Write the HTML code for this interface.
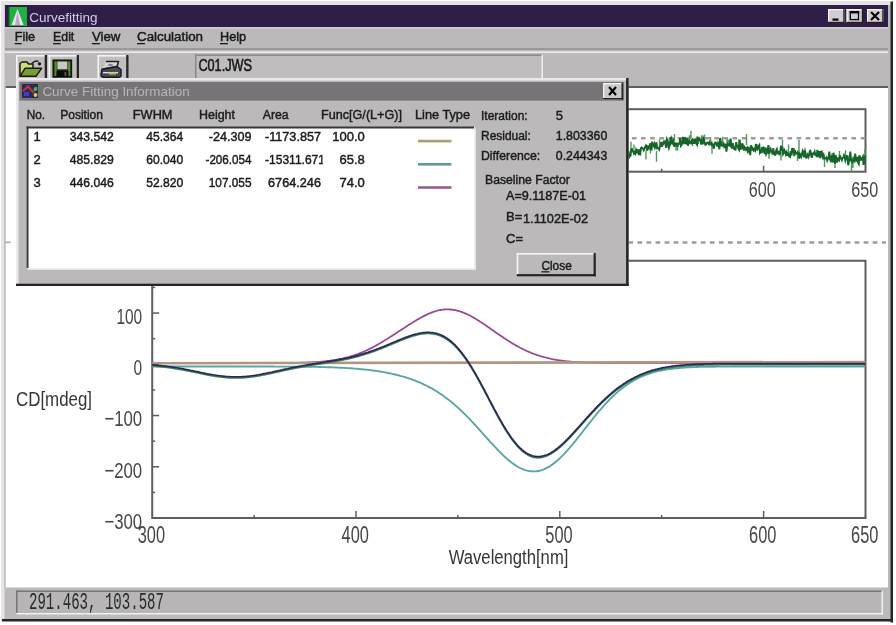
<!DOCTYPE html>
<html><head><meta charset="utf-8"><style>
html,body{margin:0;padding:0;background:#fff;width:896px;height:625px;overflow:hidden;font-family:"Liberation Sans", sans-serif;}
svg{display:block;filter:blur(0.35px);}
</style></head><body>
<svg width="896" height="625" viewBox="0 0 896 625" font-family="'Liberation Sans', sans-serif"><rect x="0" y="0" width="896" height="625" fill="#ffffff" />
<rect x="2" y="2" width="891" height="619" fill="#bbb9ba" />
<rect x="1" y="1" width="892" height="4" fill="#e4e2e2" />
<rect x="1" y="1" width="3.5" height="620" fill="#e6e4e4" />
<rect x="890.5" y="1.5" width="2.5" height="621" fill="#262424" />
<rect x="2" y="619" width="891" height="2.5" fill="#262424" />
<rect x="5" y="5" width="883" height="22" fill="#2e1e48" />
<rect x="5" y="27" width="883" height="2" fill="#cac8cc" />
<rect x="8" y="7" width="19" height="19" fill="#22b040" />
<rect x="8" y="7" width="1.5" height="19" fill="#105020" />
<path d="M17.5,9 L11.5,25 L23.5,25 Z" fill="#ece6f2"/><path d="M17.5,11 L15,25 L20,25 Z" fill="#b070b8" opacity="0.6"/>
<text x="29.2" y="21.6" font-size="12.6" fill="#d4ccee" textLength="68.4" lengthAdjust="spacingAndGlyphs" >Curvefitting</text>
<rect x="828" y="9" width="16.5" height="14" fill="#cfcdce" />
<rect x="828" y="9" width="16.5" height="1.2" fill="#f4f4f4" />
<rect x="828" y="9" width="1.2" height="14" fill="#f4f4f4" />
<rect x="828" y="21.8" width="16.5" height="1.2" fill="#202020" />
<rect x="843.3" y="9" width="1.2" height="14" fill="#202020" />
<rect x="832.5" y="18.5" width="6" height="2.2" fill="#000" />
<rect x="846.5" y="9" width="16.5" height="14" fill="#cfcdce" />
<rect x="846.5" y="9" width="16.5" height="1.2" fill="#f4f4f4" />
<rect x="846.5" y="9" width="1.2" height="14" fill="#f4f4f4" />
<rect x="846.5" y="21.8" width="16.5" height="1.2" fill="#202020" />
<rect x="861.8" y="9" width="1.2" height="14" fill="#202020" />
<rect x="850.3" y="11.8" width="8.2" height="7.8" fill="none" stroke="#000" stroke-width="1.3"/>
<rect x="849.7" y="11.2" width="9.5" height="2.2" fill="#000" />
<rect x="867" y="9" width="16.5" height="14" fill="#cfcdce" />
<rect x="867" y="9" width="16.5" height="1.2" fill="#f4f4f4" />
<rect x="867" y="9" width="1.2" height="14" fill="#f4f4f4" />
<rect x="867" y="21.8" width="16.5" height="1.2" fill="#202020" />
<rect x="882.3" y="9" width="1.2" height="14" fill="#202020" />
<path d="M871,12 L879,20 M879,12 L871,20" stroke="#000" stroke-width="2.1"/>
<text x="14.7" y="41.4" font-size="12.3" fill="#1a1a1a" textLength="20.500000000000004" lengthAdjust="spacingAndGlyphs" stroke="#1a1a1a" stroke-width="0.45" >File</text>
<rect x="14.7" y="43" width="7" height="1.3" fill="#1a1a1a" />
<text x="53.1" y="41.4" font-size="12.3" fill="#1a1a1a" textLength="21.199999999999996" lengthAdjust="spacingAndGlyphs" stroke="#1a1a1a" stroke-width="0.45" >Edit</text>
<rect x="53.1" y="43" width="7.5" height="1.3" fill="#1a1a1a" />
<text x="91.9" y="41.4" font-size="12.3" fill="#1a1a1a" textLength="28.5" lengthAdjust="spacingAndGlyphs" stroke="#1a1a1a" stroke-width="0.45" >View</text>
<rect x="91.9" y="43" width="8" height="1.3" fill="#1a1a1a" />
<text x="137" y="41.4" font-size="12.3" fill="#1a1a1a" textLength="66" lengthAdjust="spacingAndGlyphs" stroke="#1a1a1a" stroke-width="0.45" >Calculation</text>
<rect x="137" y="43" width="8" height="1.3" fill="#1a1a1a" />
<text x="220" y="41.4" font-size="12.3" fill="#1a1a1a" textLength="26" lengthAdjust="spacingAndGlyphs" stroke="#1a1a1a" stroke-width="0.45" >Help</text>
<rect x="220" y="43" width="8" height="1.3" fill="#1a1a1a" />
<rect x="5" y="48.3" width="883" height="1.4" fill="#8e8c8c" />
<rect x="5" y="51.4" width="883" height="1.6" fill="#eeecee" />
<rect x="16" y="55" width="31" height="24" fill="#c0bebf" />
<rect x="16" y="55" width="31" height="1.6" fill="#f6f6f6" />
<rect x="16" y="55" width="1.6" height="24" fill="#f6f6f6" />
<rect x="44.7" y="55" width="2.3" height="24" fill="#262626" />
<rect x="48.5" y="55" width="30.5" height="24" fill="#c0bebf" />
<rect x="48.5" y="55" width="30.5" height="1.6" fill="#f6f6f6" />
<rect x="48.5" y="55" width="1.6" height="24" fill="#f6f6f6" />
<rect x="76.7" y="55" width="2.3" height="24" fill="#262626" />
<rect x="97.5" y="55" width="31" height="24" fill="#c0bebf" />
<rect x="97.5" y="55" width="31" height="1.6" fill="#f6f6f6" />
<rect x="97.5" y="55" width="1.6" height="24" fill="#f6f6f6" />
<rect x="126.2" y="55" width="2.3" height="24" fill="#262626" />
<path d="M20,76 L20,63.5 L22,62 L27,62 L28.5,64 L33,64 L33,68.5" fill="#c8e070" stroke="#1a1a10" stroke-width="1.5" stroke-linejoin="round"/>
<path d="M20,76.3 L25,68.3 L41.5,68.3 L36,76.3 Z" fill="#7c9c30" stroke="#1a1a10" stroke-width="1.5" stroke-linejoin="round"/>
<path d="M32,63.5 Q35,60 38.5,61.5" stroke="#202020" stroke-width="1.6" fill="none"/><circle cx="39.5" cy="63.8" r="1.6" fill="#101010"/>
<rect x="53.2" y="60.2" width="18.2" height="16.8" fill="#1c2810" stroke="#10160a" stroke-width="1.5"/>
<rect x="54.5" y="61.5" width="2.3" height="14.5" fill="#5a8a30"/><rect x="68" y="61.5" width="2.3" height="14.5" fill="#5a8a30"/>
<rect x="57.4" y="61.5" width="10" height="7.8" fill="#c8c8c4"/><rect x="56.5" y="71" width="12" height="6" fill="#0c0c0c"/><rect x="64.5" y="72" width="1.8" height="4" fill="#5a5a50"/>
<path d="M106,61.5 L118.5,61.5 L117,66.5 L102.5,69" fill="#d4d8cc" stroke="#202020" stroke-width="1.5" stroke-linejoin="round"/>
<path d="M102,69.5 L117,66.5 L121,69.5 L121,75 Q121,77.3 118.5,77.3 L104,77.3 Q101,77.3 101,74.5 Z" fill="#4c4858" stroke="#1c1c1c" stroke-width="1.5"/>
<rect x="103" y="72" width="15" height="1.3" fill="#e0e0ea"/><rect x="109" y="72.6" width="7" height="2" fill="#a8c040"/><ellipse cx="110.5" cy="65" rx="2.6" ry="1.1" fill="#8070a0"/>
<rect x="195" y="54.5" width="348" height="23.5" fill="#bfbdbe" />
<rect x="195" y="54.5" width="348" height="1.5" fill="#8a8888" />
<rect x="195" y="54.5" width="1.5" height="23.5" fill="#8a8888" />
<rect x="541.5" y="54.5" width="1.5" height="23.5" fill="#f0f0f0" />
<text x="198.4" y="71.2" font-size="16.5" fill="#1a1a1a" textLength="53.6" lengthAdjust="spacingAndGlyphs" stroke="#1a1a1a" stroke-width="0.6" >C01.JWS</text>
<rect x="5" y="86" width="883" height="501.5" fill="#ffffff" />
<rect x="5" y="86.2" width="883" height="1.6" fill="#383636" />
<rect x="4" y="86" width="1.8" height="501.5" fill="#c4c0c0" />
<rect x="16" y="590.5" width="867" height="24" fill="#b7b5b6" />
<rect x="16" y="590.5" width="867" height="1.5" fill="#767474" />
<rect x="16" y="590.5" width="1.5" height="24" fill="#767474" />
<rect x="16" y="613" width="867" height="1.5" fill="#f2f2f2" />
<rect x="881.5" y="590.5" width="1.5" height="24" fill="#f2f2f2" />
<text x="29" y="609.3" font-family="Liberation Mono" font-size="23" fill="#2a2a2a" textLength="135" lengthAdjust="spacingAndGlyphs">291.463, 103.587</text>
<line x1="5" y1="242.6" x2="886" y2="242.6" stroke="#a49a9a" stroke-width="2.5" stroke-dasharray="4.7,4.35" stroke-dashoffset="1.05"/>
<rect x="5.8" y="240" width="10.2" height="5" fill="#ffffff" />
<line x1="5" y1="242.3" x2="10.6" y2="242.3" stroke="#b4a8a8" stroke-width="1.6" />
<rect x="152.2" y="109.2" width="713.3" height="62.5" fill="none" stroke="#625c5c" stroke-width="2"/>
<line x1="152.2" y1="138.2" x2="865.5" y2="138.2" stroke="#a49a9a" stroke-width="2.4" stroke-dasharray="4.6,4.55" stroke-dashoffset="5.25"/>
<line x1="254.09999999999997" y1="171.7" x2="254.09999999999997" y2="168.7" stroke="#625c5c" stroke-width="1.5" />
<line x1="356.0" y1="171.7" x2="356.0" y2="165.7" stroke="#625c5c" stroke-width="1.5" />
<line x1="457.9" y1="171.7" x2="457.9" y2="168.7" stroke="#625c5c" stroke-width="1.5" />
<line x1="559.8" y1="171.7" x2="559.8" y2="165.7" stroke="#625c5c" stroke-width="1.5" />
<line x1="661.6999999999999" y1="171.7" x2="661.6999999999999" y2="168.7" stroke="#625c5c" stroke-width="1.5" />
<line x1="763.5999999999999" y1="171.7" x2="763.5999999999999" y2="165.7" stroke="#625c5c" stroke-width="1.5" />
<path d="M631.0,152.0 L631.0,141.7 M634.0,152.7 L634.0,144.4 M646.0,150.8 L646.0,159.6 M650.5,147.8 L650.5,153.6 M656.5,151.0 L656.5,161.8 M659.5,145.5 L659.5,139.2 M662.5,146.1 L662.5,141.5 M665.5,145.4 L665.5,139.7 M671.5,141.8 L671.5,135.6 M674.5,141.2 L674.5,133.9 M676.0,142.8 L676.0,150.5 M677.5,142.4 L677.5,150.8 M689.5,144.1 L689.5,135.3 M691.0,138.2 L691.0,131.0 M692.5,142.1 L692.5,146.2 M697.0,142.0 L697.0,136.3 M698.5,139.1 L698.5,144.1 M701.5,142.5 L701.5,135.4 M704.5,139.7 L704.5,134.5 M710.5,141.3 L710.5,136.9 M712.0,144.2 L712.0,153.8 M722.5,144.6 L722.5,136.8 M727.0,146.6 L727.0,139.0 M728.5,145.7 L728.5,139.5 M730.0,146.8 L730.0,140.2 M739.0,148.1 L739.0,139.3 M746.5,145.3 L746.5,134.1 M769.0,149.6 L769.0,158.7 M781.0,151.7 L781.0,160.5 M782.5,151.5 L782.5,139.8 M788.5,153.9 L788.5,144.4 M797.5,153.8 L797.5,161.0 M799.0,151.4 L799.0,140.1 M805.0,155.8 L805.0,147.8 M809.5,156.0 L809.5,149.8 M824.5,158.0 L824.5,166.9 M830.5,158.1 L830.5,162.3 M832.0,158.4 L832.0,153.3 M835.0,158.8 L835.0,168.0 M839.5,158.9 L839.5,151.1 M845.5,158.5 L845.5,150.2 M851.5,161.1 L851.5,172.6 M853.0,156.6 L853.0,167.9 M865.0,159.9 L865.0,149.0" fill="none" stroke="#4a9a58" stroke-width="1.4"/>
<path d="M620.0,156.3 L620.7,158.2 L621.4,156.2 L622.1,155.9 L622.8,154.1 L623.5,155.9 L624.2,159.2 L624.9,157.3 L625.6,158.8 L626.3,156.7 L627.0,156.9 L627.7,156.1 L628.4,151.0 L629.1,157.2 L629.8,156.0 L630.5,155.7 L631.2,149.7 L631.9,149.2 L632.6,151.1 L633.3,151.9 L634.0,153.6 L634.7,152.4 L635.4,153.6 L636.1,150.2 L636.8,152.4 L637.5,152.3 L638.2,149.3 L638.9,155.1 L639.6,151.8 L640.3,153.2 L641.0,148.1 L641.7,147.5 L642.4,148.2 L643.1,148.6 L643.8,150.2 L644.5,148.9 L645.2,146.8 L645.9,145.4 L646.6,146.4 L647.3,150.8 L648.0,145.4 L648.7,148.0 L649.4,148.4 L650.1,143.3 L650.8,147.2 L651.5,150.3 L652.2,141.6 L652.9,145.8 L653.6,146.3 L654.3,144.3 L655.0,147.6 L655.7,146.1 L656.4,142.3 L657.1,148.1 L657.8,147.6 L658.5,148.2 L659.2,149.4 L659.9,146.5 L660.6,145.7 L661.3,141.9 L662.0,146.8 L662.7,143.5 L663.4,143.8 L664.1,141.5 L664.8,142.2 L665.5,143.2 L666.2,147.8 L666.9,139.1 L667.6,140.4 L668.3,144.7 L669.0,147.8 L669.7,145.4 L670.4,138.8 L671.1,137.1 L671.8,144.5 L672.5,141.5 L673.2,140.4 L673.9,145.7 L674.6,145.9 L675.3,143.4 L676.0,143.5 L676.7,143.8 L677.4,146.7 L678.1,144.1 L678.8,143.8 L679.5,143.8 L680.2,138.2 L680.9,145.6 L681.6,144.6 L682.3,143.5 L683.0,136.9 L683.7,140.3 L684.4,144.1 L685.1,137.1 L685.8,141.3 L686.5,144.3 L687.2,138.2 L687.9,145.7 L688.6,142.9 L689.3,141.0 L690.0,142.2 L690.7,143.0 L691.4,141.5 L692.1,144.1 L692.8,139.4 L693.5,139.9 L694.2,143.7 L694.9,141.0 L695.6,138.5 L696.3,143.2 L697.0,144.5 L697.7,139.5 L698.4,137.0 L699.1,140.2 L699.8,140.3 L700.5,140.0 L701.2,144.6 L701.9,138.4 L702.6,144.5 L703.3,138.1 L704.0,139.5 L704.7,143.3 L705.4,144.7 L706.1,144.2 L706.8,143.0 L707.5,142.6 L708.2,142.7 L708.9,144.0 L709.6,142.2 L710.3,143.5 L711.0,144.4 L711.7,143.0 L712.4,145.2 L713.1,144.8 L713.8,148.7 L714.5,144.4 L715.2,142.6 L715.9,142.9 L716.6,144.0 L717.3,146.6 L718.0,143.4 L718.7,145.4 L719.4,149.3 L720.1,138.0 L720.8,141.8 L721.5,145.4 L722.2,145.9 L722.9,145.6 L723.6,143.9 L724.3,146.8 L725.0,145.9 L725.7,143.9 L726.4,151.7 L727.1,146.4 L727.8,144.1 L728.5,145.3 L729.2,145.1 L729.9,145.6 L730.6,138.7 L731.3,144.7 L732.0,148.6 L732.7,143.0 L733.4,146.0 L734.1,148.7 L734.8,148.5 L735.5,150.3 L736.2,142.1 L736.9,145.6 L737.6,145.8 L738.3,148.3 L739.0,149.6 L739.7,139.9 L740.4,149.8 L741.1,143.3 L741.8,148.9 L742.5,143.3 L743.2,147.7 L743.9,150.5 L744.6,147.1 L745.3,148.0 L746.0,149.7 L746.7,148.1 L747.4,147.5 L748.1,151.8 L748.8,150.7 L749.5,147.3 L750.2,155.2 L750.9,145.2 L751.6,150.6 L752.3,147.7 L753.0,148.8 L753.7,150.3 L754.4,149.2 L755.1,150.3 L755.8,144.8 L756.5,144.9 L757.2,150.5 L757.9,146.5 L758.6,146.4 L759.3,145.3 L760.0,152.5 L760.7,151.3 L761.4,153.2 L762.1,147.1 L762.8,149.6 L763.5,146.7 L764.2,151.7 L764.9,154.0 L765.6,147.6 L766.3,154.0 L767.0,152.6 L767.7,149.7 L768.4,145.1 L769.1,154.0 L769.8,150.1 L770.5,148.9 L771.2,151.6 L771.9,151.7 L772.6,154.6 L773.3,148.1 L774.0,153.8 L774.7,154.8 L775.4,154.8 L776.1,150.7 L776.8,149.3 L777.5,153.9 L778.2,151.7 L778.9,151.8 L779.6,155.2 L780.3,150.9 L781.0,145.7 L781.7,150.8 L782.4,147.0 L783.1,154.1 L783.8,152.9 L784.5,150.5 L785.2,152.2 L785.9,154.4 L786.6,152.6 L787.3,155.9 L788.0,152.4 L788.7,155.3 L789.4,156.6 L790.1,157.0 L790.8,151.1 L791.5,155.3 L792.2,148.2 L792.9,150.3 L793.6,148.1 L794.3,156.1 L795.0,150.2 L795.7,153.5 L796.4,153.1 L797.1,153.6 L797.8,152.2 L798.5,154.4 L799.2,158.6 L799.9,154.1 L800.6,155.5 L801.3,156.8 L802.0,153.8 L802.7,151.1 L803.4,153.0 L804.1,157.3 L804.8,150.3 L805.5,153.2 L806.2,157.4 L806.9,156.9 L807.6,155.0 L808.3,157.2 L809.0,155.6 L809.7,152.2 L810.4,151.3 L811.1,153.8 L811.8,157.9 L812.5,154.1 L813.2,153.3 L813.9,153.8 L814.6,151.9 L815.3,155.6 L816.0,152.9 L816.7,157.0 L817.4,149.9 L818.1,157.0 L818.8,154.5 L819.5,151.2 L820.2,158.2 L820.9,155.6 L821.6,150.6 L822.3,154.2 L823.0,157.3 L823.7,155.4 L824.4,158.6 L825.1,158.6 L825.8,158.4 L826.5,157.6 L827.2,160.3 L827.9,158.6 L828.6,158.1 L829.3,151.6 L830.0,159.4 L830.7,160.5 L831.4,156.4 L832.1,156.0 L832.8,162.3 L833.5,152.7 L834.2,158.6 L834.9,163.7 L835.6,155.0 L836.3,159.3 L837.0,162.5 L837.7,157.3 L838.4,159.1 L839.1,160.1 L839.8,155.4 L840.5,157.6 L841.2,158.6 L841.9,160.1 L842.6,157.9 L843.3,157.5 L844.0,155.4 L844.7,157.2 L845.4,160.5 L846.1,158.5 L846.8,156.0 L847.5,156.1 L848.2,165.2 L848.9,161.3 L849.6,160.1 L850.3,151.7 L851.0,160.1 L851.7,159.8 L852.4,163.0 L853.1,159.7 L853.8,158.5 L854.5,160.1 L855.2,153.7 L855.9,161.5 L856.6,159.7 L857.3,157.0 L858.0,162.4 L858.7,163.7 L859.4,155.4 L860.1,157.3 L860.8,159.8 L861.5,159.6 L862.2,158.1 L862.9,156.7 L863.6,164.8 L864.3,162.0 L865.0,156.2 L865.7,155.9" fill="none" stroke="#17652a" stroke-width="2"/>
<text x="762.3" y="196.6" font-size="22.5" fill="#4a4646" textLength="27" lengthAdjust="spacingAndGlyphs" text-anchor="middle" >600</text>
<text x="864.7" y="196.6" font-size="22.5" fill="#4a4646" textLength="27" lengthAdjust="spacingAndGlyphs" text-anchor="middle" >650</text>
<path d="M152.2,518 L152.2,260.7 L865.5,260.7 L865.5,518 Z" fill="none" stroke="#625c5c" stroke-width="2"/>
<line x1="152.2" y1="518.05" x2="159.2" y2="518.05" stroke="#625c5c" stroke-width="1.5" />
<line x1="152.2" y1="492.425" x2="155.2" y2="492.425" stroke="#625c5c" stroke-width="1.5" />
<line x1="152.2" y1="466.8" x2="159.2" y2="466.8" stroke="#625c5c" stroke-width="1.5" />
<line x1="152.2" y1="441.175" x2="155.2" y2="441.175" stroke="#625c5c" stroke-width="1.5" />
<line x1="152.2" y1="415.55" x2="159.2" y2="415.55" stroke="#625c5c" stroke-width="1.5" />
<line x1="152.2" y1="389.925" x2="155.2" y2="389.925" stroke="#625c5c" stroke-width="1.5" />
<line x1="152.2" y1="364.3" x2="159.2" y2="364.3" stroke="#625c5c" stroke-width="1.5" />
<line x1="152.2" y1="338.675" x2="155.2" y2="338.675" stroke="#625c5c" stroke-width="1.5" />
<line x1="152.2" y1="313.05" x2="159.2" y2="313.05" stroke="#625c5c" stroke-width="1.5" />
<line x1="152.2" y1="287.425" x2="155.2" y2="287.425" stroke="#625c5c" stroke-width="1.5" />
<line x1="152.2" y1="261.8" x2="159.2" y2="261.8" stroke="#625c5c" stroke-width="1.5" />
<line x1="254.09999999999997" y1="518" x2="254.09999999999997" y2="515" stroke="#625c5c" stroke-width="1.5" />
<line x1="356.0" y1="518" x2="356.0" y2="511" stroke="#625c5c" stroke-width="1.5" />
<line x1="457.9" y1="518" x2="457.9" y2="515" stroke="#625c5c" stroke-width="1.5" />
<line x1="559.8" y1="518" x2="559.8" y2="511" stroke="#625c5c" stroke-width="1.5" />
<line x1="661.6999999999999" y1="518" x2="661.6999999999999" y2="515" stroke="#625c5c" stroke-width="1.5" />
<line x1="763.5999999999999" y1="518" x2="763.5999999999999" y2="511" stroke="#625c5c" stroke-width="1.5" />
<line x1="865.5" y1="518" x2="865.5" y2="515" stroke="#625c5c" stroke-width="1.5" />
<text x="142.2" y="323.95" font-size="22.5" fill="#4a4646" textLength="25.799999999999997" lengthAdjust="spacingAndGlyphs" text-anchor="end" >100</text>
<text x="142.2" y="375.2" font-size="22.5" fill="#4a4646" textLength="8.6" lengthAdjust="spacingAndGlyphs" text-anchor="end" >0</text>
<text x="142.2" y="426.45" font-size="22.5" fill="#4a4646" textLength="37.8" lengthAdjust="spacingAndGlyphs" text-anchor="end" >−100</text>
<text x="142.2" y="477.7" font-size="22.5" fill="#4a4646" textLength="37.8" lengthAdjust="spacingAndGlyphs" text-anchor="end" >−200</text>
<text x="142.2" y="528.9499999999999" font-size="22.5" fill="#4a4646" textLength="37.8" lengthAdjust="spacingAndGlyphs" text-anchor="end" >−300</text>
<text x="151.39999999999998" y="542.6" font-size="23.5" fill="#4a4646" textLength="27.4" lengthAdjust="spacingAndGlyphs" text-anchor="middle" >300</text>
<text x="355.2" y="542.6" font-size="23.5" fill="#4a4646" textLength="27.4" lengthAdjust="spacingAndGlyphs" text-anchor="middle" >400</text>
<text x="559.0" y="542.6" font-size="23.5" fill="#4a4646" textLength="27.4" lengthAdjust="spacingAndGlyphs" text-anchor="middle" >500</text>
<text x="762.8" y="542.6" font-size="23.5" fill="#4a4646" textLength="27.4" lengthAdjust="spacingAndGlyphs" text-anchor="middle" >600</text>
<text x="864.7" y="542.6" font-size="23.5" fill="#4a4646" textLength="27.4" lengthAdjust="spacingAndGlyphs" text-anchor="middle" >650</text>
<text x="16" y="406" font-size="19.5" fill="#383434" textLength="76" lengthAdjust="spacingAndGlyphs" >CD[mdeg]</text>
<text x="448.7" y="563.7" font-size="19.5" fill="#383434" textLength="119.7" lengthAdjust="spacingAndGlyphs" >Wavelength[nm]</text>
<path d="M152.2,366.5 L153.2,366.5 L154.2,366.5 L155.2,366.5 L156.2,366.5 L157.2,366.5 L158.2,366.5 L159.2,366.5 L160.2,366.5 L161.2,366.5 L162.2,366.5 L163.2,366.5 L164.2,366.5 L165.2,366.5 L166.2,366.5 L167.2,366.5 L168.2,366.5 L169.2,366.5 L170.2,366.5 L171.2,366.5 L172.2,366.5 L173.2,366.5 L174.2,366.5 L175.2,366.5 L176.2,366.5 L177.2,366.5 L178.2,366.5 L179.2,366.5 L180.2,366.5 L181.2,366.5 L182.2,366.5 L183.2,366.5 L184.2,366.5 L185.2,366.5 L186.2,366.5 L187.2,366.5 L188.2,366.5 L189.2,366.5 L190.2,366.5 L191.2,366.5 L192.2,366.5 L193.2,366.5 L194.2,366.5 L195.2,366.5 L196.2,366.5 L197.2,366.5 L198.2,366.5 L199.2,366.5 L200.2,366.5 L201.2,366.5 L202.2,366.5 L203.2,366.5 L204.2,366.5 L205.2,366.5 L206.2,366.5 L207.2,366.5 L208.2,366.5 L209.2,366.5 L210.2,366.5 L211.2,366.5 L212.2,366.5 L213.2,366.5 L214.2,366.5 L215.2,366.5 L216.2,366.5 L217.2,366.5 L218.2,366.5 L219.2,366.5 L220.2,366.5 L221.2,366.5 L222.2,366.5 L223.2,366.5 L224.2,366.5 L225.2,366.5 L226.2,366.5 L227.2,366.5 L228.2,366.5 L229.2,366.5 L230.2,366.5 L231.2,366.5 L232.2,366.5 L233.2,366.5 L234.2,366.5 L235.2,366.5 L236.2,366.5 L237.2,366.5 L238.2,366.5 L239.2,366.5 L240.2,366.5 L241.2,366.5 L242.2,366.5 L243.2,366.5 L244.2,366.5 L245.2,366.5 L246.2,366.5 L247.2,366.5 L248.2,366.5 L249.2,366.5 L250.2,366.5 L251.2,366.5 L252.2,366.5 L253.2,366.5 L254.2,366.5 L255.2,366.5 L256.2,366.5 L257.2,366.5 L258.2,366.5 L259.2,366.5 L260.2,366.5 L261.2,366.5 L262.2,366.5 L263.2,366.5 L264.2,366.5 L265.2,366.5 L266.2,366.5 L267.2,366.5 L268.2,366.5 L269.2,366.5 L270.2,366.5 L271.2,366.5 L272.2,366.5 L273.2,366.5 L274.2,366.6 L275.2,366.6 L276.2,366.6 L277.2,366.6 L278.2,366.6 L279.2,366.6 L280.2,366.6 L281.2,366.6 L282.2,366.6 L283.2,366.6 L284.2,366.6 L285.2,366.6 L286.2,366.6 L287.2,366.6 L288.2,366.6 L289.2,366.6 L290.2,366.6 L291.2,366.6 L292.2,366.6 L293.2,366.6 L294.2,366.6 L295.2,366.7 L296.2,366.7 L297.2,366.7 L298.2,366.7 L299.2,366.7 L300.2,366.7 L301.2,366.7 L302.2,366.7 L303.2,366.7 L304.2,366.7 L305.2,366.8 L306.2,366.8 L307.2,366.8 L308.2,366.8 L309.2,366.8 L310.2,366.8 L311.2,366.8 L312.2,366.9 L313.2,366.9 L314.2,366.9 L315.2,366.9 L316.2,366.9 L317.2,366.9 L318.2,367.0 L319.2,367.0 L320.2,367.0 L321.2,367.0 L322.2,367.1 L323.2,367.1 L324.2,367.1 L325.2,367.1 L326.2,367.2 L327.2,367.2 L328.2,367.2 L329.2,367.3 L330.2,367.3 L331.2,367.3 L332.2,367.4 L333.2,367.4 L334.2,367.4 L335.2,367.5 L336.2,367.5 L337.2,367.6 L338.2,367.6 L339.2,367.7 L340.2,367.7 L341.2,367.8 L342.2,367.8 L343.2,367.9 L344.2,367.9 L345.2,368.0 L346.2,368.0 L347.2,368.1 L348.2,368.1 L349.2,368.2 L350.2,368.3 L351.2,368.3 L352.2,368.4 L353.2,368.5 L354.2,368.6 L355.2,368.6 L356.2,368.7 L357.2,368.8 L358.2,368.9 L359.2,369.0 L360.2,369.1 L361.2,369.2 L362.2,369.3 L363.2,369.4 L364.2,369.5 L365.2,369.6 L366.2,369.7 L367.2,369.8 L368.2,369.9 L369.2,370.0 L370.2,370.1 L371.2,370.3 L372.2,370.4 L373.2,370.5 L374.2,370.7 L375.2,370.8 L376.2,370.9 L377.2,371.1 L378.2,371.2 L379.2,371.4 L380.2,371.5 L381.2,371.7 L382.2,371.9 L383.2,372.1 L384.2,372.2 L385.2,372.4 L386.2,372.6 L387.2,372.8 L388.2,373.0 L389.2,373.2 L390.2,373.4 L391.2,373.6 L392.2,373.8 L393.2,374.1 L394.2,374.3 L395.2,374.5 L396.2,374.8 L397.2,375.0 L398.2,375.3 L399.2,375.5 L400.2,375.8 L401.2,376.1 L402.2,376.3 L403.2,376.6 L404.2,376.9 L405.2,377.2 L406.2,377.5 L407.2,377.9 L408.2,378.2 L409.2,378.5 L410.2,378.9 L411.2,379.2 L412.2,379.6 L413.2,379.9 L414.2,380.3 L415.2,380.7 L416.2,381.1 L417.2,381.5 L418.2,381.9 L419.2,382.3 L420.2,382.7 L421.2,383.2 L422.2,383.6 L423.2,384.1 L424.2,384.6 L425.2,385.0 L426.2,385.5 L427.2,386.0 L428.2,386.6 L429.2,387.1 L430.2,387.6 L431.2,388.2 L432.2,388.7 L433.2,389.3 L434.2,389.9 L435.2,390.5 L436.2,391.1 L437.2,391.7 L438.2,392.4 L439.2,393.0 L440.2,393.7 L441.2,394.4 L442.2,395.0 L443.2,395.7 L444.2,396.5 L445.2,397.2 L446.2,397.9 L447.2,398.7 L448.2,399.5 L449.2,400.2 L450.2,401.0 L451.2,401.9 L452.2,402.7 L453.2,403.5 L454.2,404.4 L455.2,405.2 L456.2,406.1 L457.2,407.0 L458.2,407.9 L459.2,408.8 L460.2,409.8 L461.2,410.7 L462.2,411.7 L463.2,412.6 L464.2,413.6 L465.2,414.6 L466.2,415.6 L467.2,416.6 L468.2,417.7 L469.2,418.7 L470.2,419.7 L471.2,420.8 L472.2,421.8 L473.2,422.9 L474.2,424.0 L475.2,425.1 L476.2,426.2 L477.2,427.3 L478.2,428.4 L479.2,429.5 L480.2,430.6 L481.2,431.7 L482.2,432.8 L483.2,433.9 L484.2,435.1 L485.2,436.2 L486.2,437.3 L487.2,438.4 L488.2,439.5 L489.2,440.6 L490.2,441.8 L491.2,442.9 L492.2,443.9 L493.2,445.0 L494.2,446.1 L495.2,447.2 L496.2,448.2 L497.2,449.3 L498.2,450.3 L499.2,451.4 L500.2,452.4 L501.2,453.4 L502.2,454.3 L503.2,455.3 L504.2,456.3 L505.2,457.2 L506.2,458.1 L507.2,459.0 L508.2,459.8 L509.2,460.7 L510.2,461.5 L511.2,462.3 L512.2,463.0 L513.2,463.7 L514.2,464.4 L515.2,465.1 L516.2,465.8 L517.2,466.4 L518.2,467.0 L519.2,467.5 L520.2,468.0 L521.2,468.5 L522.2,469.0 L523.2,469.4 L524.2,469.8 L525.2,470.1 L526.2,470.4 L527.2,470.7 L528.2,470.9 L529.2,471.1 L530.2,471.2 L531.2,471.3 L532.2,471.4 L533.2,471.4 L534.2,471.4 L535.2,471.4 L536.2,471.3 L537.2,471.2 L538.2,471.0 L539.2,470.8 L540.2,470.6 L541.2,470.3 L542.2,469.9 L543.2,469.6 L544.2,469.2 L545.2,468.7 L546.2,468.2 L547.2,467.7 L548.2,467.2 L549.2,466.6 L550.2,466.0 L551.2,465.3 L552.2,464.6 L553.2,463.9 L554.2,463.1 L555.2,462.3 L556.2,461.5 L557.2,460.6 L558.2,459.7 L559.2,458.8 L560.2,457.9 L561.2,456.9 L562.2,455.9 L563.2,454.9 L564.2,453.8 L565.2,452.8 L566.2,451.7 L567.2,450.6 L568.2,449.4 L569.2,448.3 L570.2,447.1 L571.2,446.0 L572.2,444.8 L573.2,443.5 L574.2,442.3 L575.2,441.1 L576.2,439.9 L577.2,438.6 L578.2,437.3 L579.2,436.1 L580.2,434.8 L581.2,433.5 L582.2,432.3 L583.2,431.0 L584.2,429.7 L585.2,428.4 L586.2,427.1 L587.2,425.9 L588.2,424.6 L589.2,423.3 L590.2,422.0 L591.2,420.8 L592.2,419.5 L593.2,418.3 L594.2,417.0 L595.2,415.8 L596.2,414.6 L597.2,413.4 L598.2,412.2 L599.2,411.0 L600.2,409.8 L601.2,408.7 L602.2,407.5 L603.2,406.4 L604.2,405.3 L605.2,404.2 L606.2,403.1 L607.2,402.0 L608.2,401.0 L609.2,400.0 L610.2,398.9 L611.2,398.0 L612.2,397.0 L613.2,396.0 L614.2,395.1 L615.2,394.1 L616.2,393.2 L617.2,392.4 L618.2,391.5 L619.2,390.6 L620.2,389.8 L621.2,389.0 L622.2,388.2 L623.2,387.5 L624.2,386.7 L625.2,386.0 L626.2,385.3 L627.2,384.6 L628.2,383.9 L629.2,383.2 L630.2,382.6 L631.2,382.0 L632.2,381.4 L633.2,380.8 L634.2,380.2 L635.2,379.7 L636.2,379.1 L637.2,378.6 L638.2,378.1 L639.2,377.6 L640.2,377.2 L641.2,376.7 L642.2,376.3 L643.2,375.9 L644.2,375.5 L645.2,375.1 L646.2,374.7 L647.2,374.3 L648.2,374.0 L649.2,373.6 L650.2,373.3 L651.2,373.0 L652.2,372.7 L653.2,372.4 L654.2,372.1 L655.2,371.9 L656.2,371.6 L657.2,371.4 L658.2,371.1 L659.2,370.9 L660.2,370.7 L661.2,370.5 L662.2,370.3 L663.2,370.1 L664.2,369.9 L665.2,369.7 L666.2,369.6 L667.2,369.4 L668.2,369.2 L669.2,369.1 L670.2,369.0 L671.2,368.8 L672.2,368.7 L673.2,368.6 L674.2,368.5 L675.2,368.4 L676.2,368.3 L677.2,368.2 L678.2,368.1 L679.2,368.0 L680.2,367.9 L681.2,367.8 L682.2,367.8 L683.2,367.7 L684.2,367.6 L685.2,367.6 L686.2,367.5 L687.2,367.4 L688.2,367.4 L689.2,367.3 L690.2,367.3 L691.2,367.2 L692.2,367.2 L693.2,367.1 L694.2,367.1 L695.2,367.1 L696.2,367.0 L697.2,367.0 L698.2,367.0 L699.2,366.9 L700.2,366.9 L701.2,366.9 L702.2,366.9 L703.2,366.8 L704.2,366.8 L705.2,366.8 L706.2,366.8 L707.2,366.8 L708.2,366.7 L709.2,366.7 L710.2,366.7 L711.2,366.7 L712.2,366.7 L713.2,366.7 L714.2,366.7 L715.2,366.7 L716.2,366.6 L717.2,366.6 L718.2,366.6 L719.2,366.6 L720.2,366.6 L721.2,366.6 L722.2,366.6 L723.2,366.6 L724.2,366.6 L725.2,366.6 L726.2,366.6 L727.2,366.6 L728.2,366.6 L729.2,366.6 L730.2,366.6 L731.2,366.6 L732.2,366.5 L733.2,366.5 L734.2,366.5 L735.2,366.5 L736.2,366.5 L737.2,366.5 L738.2,366.5 L739.2,366.5 L740.2,366.5 L741.2,366.5 L742.2,366.5 L743.2,366.5 L744.2,366.5 L745.2,366.5 L746.2,366.5 L747.2,366.5 L748.2,366.5 L749.2,366.5 L750.2,366.5 L751.2,366.5 L752.2,366.5 L753.2,366.5 L754.2,366.5 L755.2,366.5 L756.2,366.5 L757.2,366.5 L758.2,366.5 L759.2,366.5 L760.2,366.5 L761.2,366.5 L762.2,366.5 L763.2,366.5 L764.2,366.5 L765.2,366.5 L766.2,366.5 L767.2,366.5 L768.2,366.5 L769.2,366.5 L770.2,366.5 L771.2,366.5 L772.2,366.5 L773.2,366.5 L774.2,366.5 L775.2,366.5 L776.2,366.5 L777.2,366.5 L778.2,366.5 L779.2,366.5 L780.2,366.5 L781.2,366.5 L782.2,366.5 L783.2,366.5 L784.2,366.5 L785.2,366.5 L786.2,366.5 L787.2,366.5 L788.2,366.5 L789.2,366.5 L790.2,366.5 L791.2,366.5 L792.2,366.5 L793.2,366.5 L794.2,366.5 L795.2,366.5 L796.2,366.5 L797.2,366.5 L798.2,366.5 L799.2,366.5 L800.2,366.5 L801.2,366.5 L802.2,366.5 L803.2,366.5 L804.2,366.5 L805.2,366.5 L806.2,366.5 L807.2,366.5 L808.2,366.5 L809.2,366.5 L810.2,366.5 L811.2,366.5 L812.2,366.5 L813.2,366.5 L814.2,366.5 L815.2,366.5 L816.2,366.5 L817.2,366.5 L818.2,366.5 L819.2,366.5 L820.2,366.5 L821.2,366.5 L822.2,366.5 L823.2,366.5 L824.2,366.5 L825.2,366.5 L826.2,366.5 L827.2,366.5 L828.2,366.5 L829.2,366.5 L830.2,366.5 L831.2,366.5 L832.2,366.5 L833.2,366.5 L834.2,366.5 L835.2,366.5 L836.2,366.5 L837.2,366.5 L838.2,366.5 L839.2,366.5 L840.2,366.5 L841.2,366.5 L842.2,366.5 L843.2,366.5 L844.2,366.5 L845.2,366.5 L846.2,366.5 L847.2,366.5 L848.2,366.5 L849.2,366.5 L850.2,366.5 L851.2,366.5 L852.2,366.5 L853.2,366.5 L854.2,366.5 L855.2,366.5 L856.2,366.5 L857.2,366.5 L858.2,366.5 L859.2,366.5 L860.2,366.5 L861.2,366.5 L862.2,366.5 L863.2,366.5 L864.2,366.5 L865.2,366.5" fill="none" stroke="#5aa6a6" stroke-width="1.9"/>
<path d="M152.2,363.2 L153.2,363.2 L154.2,363.2 L155.2,363.2 L156.2,363.2 L157.2,363.2 L158.2,363.2 L159.2,363.2 L160.2,363.2 L161.2,363.2 L162.2,363.2 L163.2,363.2 L164.2,363.2 L165.2,363.2 L166.2,363.2 L167.2,363.2 L168.2,363.2 L169.2,363.2 L170.2,363.2 L171.2,363.2 L172.2,363.2 L173.2,363.2 L174.2,363.2 L175.2,363.2 L176.2,363.2 L177.2,363.2 L178.2,363.2 L179.2,363.2 L180.2,363.2 L181.2,363.2 L182.2,363.2 L183.2,363.2 L184.2,363.2 L185.2,363.2 L186.2,363.2 L187.2,363.2 L188.2,363.2 L189.2,363.2 L190.2,363.2 L191.2,363.2 L192.2,363.2 L193.2,363.2 L194.2,363.2 L195.2,363.2 L196.2,363.2 L197.2,363.2 L198.2,363.2 L199.2,363.2 L200.2,363.2 L201.2,363.2 L202.2,363.2 L203.2,363.2 L204.2,363.2 L205.2,363.2 L206.2,363.2 L207.2,363.2 L208.2,363.2 L209.2,363.2 L210.2,363.2 L211.2,363.2 L212.2,363.2 L213.2,363.2 L214.2,363.2 L215.2,363.2 L216.2,363.2 L217.2,363.2 L218.2,363.2 L219.2,363.2 L220.2,363.2 L221.2,363.2 L222.2,363.2 L223.2,363.2 L224.2,363.2 L225.2,363.2 L226.2,363.2 L227.2,363.2 L228.2,363.2 L229.2,363.2 L230.2,363.2 L231.2,363.2 L232.2,363.2 L233.2,363.2 L234.2,363.2 L235.2,363.2 L236.2,363.2 L237.2,363.2 L238.2,363.2 L239.2,363.2 L240.2,363.2 L241.2,363.2 L242.2,363.2 L243.2,363.2 L244.2,363.2 L245.2,363.2 L246.2,363.2 L247.2,363.2 L248.2,363.2 L249.2,363.2 L250.2,363.2 L251.2,363.2 L252.2,363.2 L253.2,363.2 L254.2,363.2 L255.2,363.2 L256.2,363.2 L257.2,363.2 L258.2,363.2 L259.2,363.2 L260.2,363.2 L261.2,363.2 L262.2,363.2 L263.2,363.2 L264.2,363.2 L265.2,363.2 L266.2,363.2 L267.2,363.2 L268.2,363.2 L269.2,363.2 L270.2,363.2 L271.2,363.1 L272.2,363.1 L273.2,363.1 L274.2,363.1 L275.2,363.1 L276.2,363.1 L277.2,363.1 L278.2,363.1 L279.2,363.1 L280.2,363.1 L281.2,363.1 L282.2,363.1 L283.2,363.1 L284.2,363.1 L285.2,363.1 L286.2,363.0 L287.2,363.0 L288.2,363.0 L289.2,363.0 L290.2,363.0 L291.2,363.0 L292.2,363.0 L293.2,362.9 L294.2,362.9 L295.2,362.9 L296.2,362.9 L297.2,362.9 L298.2,362.8 L299.2,362.8 L300.2,362.8 L301.2,362.7 L302.2,362.7 L303.2,362.7 L304.2,362.6 L305.2,362.6 L306.2,362.6 L307.2,362.5 L308.2,362.5 L309.2,362.4 L310.2,362.4 L311.2,362.3 L312.2,362.3 L313.2,362.2 L314.2,362.2 L315.2,362.1 L316.2,362.0 L317.2,362.0 L318.2,361.9 L319.2,361.8 L320.2,361.7 L321.2,361.6 L322.2,361.6 L323.2,361.5 L324.2,361.4 L325.2,361.3 L326.2,361.1 L327.2,361.0 L328.2,360.9 L329.2,360.8 L330.2,360.7 L331.2,360.5 L332.2,360.4 L333.2,360.2 L334.2,360.1 L335.2,359.9 L336.2,359.7 L337.2,359.6 L338.2,359.4 L339.2,359.2 L340.2,359.0 L341.2,358.8 L342.2,358.6 L343.2,358.3 L344.2,358.1 L345.2,357.9 L346.2,357.6 L347.2,357.3 L348.2,357.1 L349.2,356.8 L350.2,356.5 L351.2,356.2 L352.2,355.9 L353.2,355.6 L354.2,355.3 L355.2,354.9 L356.2,354.6 L357.2,354.2 L358.2,353.9 L359.2,353.5 L360.2,353.1 L361.2,352.7 L362.2,352.3 L363.2,351.9 L364.2,351.4 L365.2,351.0 L366.2,350.5 L367.2,350.1 L368.2,349.6 L369.2,349.1 L370.2,348.6 L371.2,348.1 L372.2,347.6 L373.2,347.1 L374.2,346.5 L375.2,346.0 L376.2,345.4 L377.2,344.9 L378.2,344.3 L379.2,343.7 L380.2,343.2 L381.2,342.6 L382.2,342.0 L383.2,341.4 L384.2,340.7 L385.2,340.1 L386.2,339.5 L387.2,338.9 L388.2,338.3 L389.2,337.6 L390.2,337.0 L391.2,336.3 L392.2,335.7 L393.2,335.0 L394.2,334.4 L395.2,333.7 L396.2,333.1 L397.2,332.4 L398.2,331.8 L399.2,331.1 L400.2,330.5 L401.2,329.8 L402.2,329.2 L403.2,328.5 L404.2,327.9 L405.2,327.2 L406.2,326.6 L407.2,325.9 L408.2,325.3 L409.2,324.6 L410.2,324.0 L411.2,323.4 L412.2,322.8 L413.2,322.1 L414.2,321.5 L415.2,320.9 L416.2,320.3 L417.2,319.7 L418.2,319.1 L419.2,318.6 L420.2,318.0 L421.2,317.5 L422.2,316.9 L423.2,316.4 L424.2,315.9 L425.2,315.4 L426.2,314.9 L427.2,314.4 L428.2,313.9 L429.2,313.5 L430.2,313.1 L431.2,312.7 L432.2,312.3 L433.2,311.9 L434.2,311.6 L435.2,311.3 L436.2,311.0 L437.2,310.7 L438.2,310.5 L439.2,310.2 L440.2,310.0 L441.2,309.9 L442.2,309.7 L443.2,309.6 L444.2,309.5 L445.2,309.4 L446.2,309.4 L447.2,309.4 L448.2,309.4 L449.2,309.4 L450.2,309.5 L451.2,309.6 L452.2,309.7 L453.2,309.8 L454.2,310.0 L455.2,310.2 L456.2,310.4 L457.2,310.6 L458.2,310.9 L459.2,311.2 L460.2,311.5 L461.2,311.8 L462.2,312.2 L463.2,312.6 L464.2,313.0 L465.2,313.4 L466.2,313.8 L467.2,314.3 L468.2,314.8 L469.2,315.3 L470.2,315.8 L471.2,316.3 L472.2,316.9 L473.2,317.4 L474.2,318.0 L475.2,318.6 L476.2,319.2 L477.2,319.8 L478.2,320.4 L479.2,321.0 L480.2,321.7 L481.2,322.3 L482.2,323.0 L483.2,323.7 L484.2,324.3 L485.2,325.0 L486.2,325.7 L487.2,326.4 L488.2,327.1 L489.2,327.8 L490.2,328.5 L491.2,329.2 L492.2,329.9 L493.2,330.6 L494.2,331.3 L495.2,332.0 L496.2,332.7 L497.2,333.4 L498.2,334.1 L499.2,334.8 L500.2,335.5 L501.2,336.1 L502.2,336.8 L503.2,337.5 L504.2,338.2 L505.2,338.8 L506.2,339.5 L507.2,340.1 L508.2,340.8 L509.2,341.4 L510.2,342.0 L511.2,342.6 L512.2,343.3 L513.2,343.9 L514.2,344.4 L515.2,345.0 L516.2,345.6 L517.2,346.1 L518.2,346.7 L519.2,347.2 L520.2,347.8 L521.2,348.3 L522.2,348.8 L523.2,349.3 L524.2,349.8 L525.2,350.2 L526.2,350.7 L527.2,351.2 L528.2,351.6 L529.2,352.0 L530.2,352.4 L531.2,352.9 L532.2,353.3 L533.2,353.6 L534.2,354.0 L535.2,354.4 L536.2,354.7 L537.2,355.1 L538.2,355.4 L539.2,355.7 L540.2,356.0 L541.2,356.3 L542.2,356.6 L543.2,356.9 L544.2,357.2 L545.2,357.5 L546.2,357.7 L547.2,358.0 L548.2,358.2 L549.2,358.4 L550.2,358.6 L551.2,358.9 L552.2,359.1 L553.2,359.3 L554.2,359.5 L555.2,359.6 L556.2,359.8 L557.2,360.0 L558.2,360.1 L559.2,360.3 L560.2,360.4 L561.2,360.6 L562.2,360.7 L563.2,360.8 L564.2,361.0 L565.2,361.1 L566.2,361.2 L567.2,361.3 L568.2,361.4 L569.2,361.5 L570.2,361.6 L571.2,361.7 L572.2,361.8 L573.2,361.8 L574.2,361.9 L575.2,362.0 L576.2,362.1 L577.2,362.1 L578.2,362.2 L579.2,362.3 L580.2,362.3 L581.2,362.4 L582.2,362.4 L583.2,362.5 L584.2,362.5 L585.2,362.5 L586.2,362.6 L587.2,362.6 L588.2,362.7 L589.2,362.7 L590.2,362.7 L591.2,362.8 L592.2,362.8 L593.2,362.8 L594.2,362.8 L595.2,362.9 L596.2,362.9 L597.2,362.9 L598.2,362.9 L599.2,362.9 L600.2,363.0 L601.2,363.0 L602.2,363.0 L603.2,363.0 L604.2,363.0 L605.2,363.0 L606.2,363.0 L607.2,363.1 L608.2,363.1 L609.2,363.1 L610.2,363.1 L611.2,363.1 L612.2,363.1 L613.2,363.1 L614.2,363.1 L615.2,363.1 L616.2,363.1 L617.2,363.1 L618.2,363.1 L619.2,363.1 L620.2,363.1 L621.2,363.2 L622.2,363.2 L623.2,363.2 L624.2,363.2 L625.2,363.2 L626.2,363.2 L627.2,363.2 L628.2,363.2 L629.2,363.2 L630.2,363.2 L631.2,363.2 L632.2,363.2 L633.2,363.2 L634.2,363.2 L635.2,363.2 L636.2,363.2 L637.2,363.2 L638.2,363.2 L639.2,363.2 L640.2,363.2 L641.2,363.2 L642.2,363.2 L643.2,363.2 L644.2,363.2 L645.2,363.2 L646.2,363.2 L647.2,363.2 L648.2,363.2 L649.2,363.2 L650.2,363.2 L651.2,363.2 L652.2,363.2 L653.2,363.2 L654.2,363.2 L655.2,363.2 L656.2,363.2 L657.2,363.2 L658.2,363.2 L659.2,363.2 L660.2,363.2 L661.2,363.2 L662.2,363.2 L663.2,363.2 L664.2,363.2 L665.2,363.2 L666.2,363.2 L667.2,363.2 L668.2,363.2 L669.2,363.2 L670.2,363.2 L671.2,363.2 L672.2,363.2 L673.2,363.2 L674.2,363.2 L675.2,363.2 L676.2,363.2 L677.2,363.2 L678.2,363.2 L679.2,363.2 L680.2,363.2 L681.2,363.2 L682.2,363.2 L683.2,363.2 L684.2,363.2 L685.2,363.2 L686.2,363.2 L687.2,363.2 L688.2,363.2 L689.2,363.2 L690.2,363.2 L691.2,363.2 L692.2,363.2 L693.2,363.2 L694.2,363.2 L695.2,363.2 L696.2,363.2 L697.2,363.2 L698.2,363.2 L699.2,363.2 L700.2,363.2 L701.2,363.2 L702.2,363.2 L703.2,363.2 L704.2,363.2 L705.2,363.2 L706.2,363.2 L707.2,363.2 L708.2,363.2 L709.2,363.2 L710.2,363.2 L711.2,363.2 L712.2,363.2 L713.2,363.2 L714.2,363.2 L715.2,363.2 L716.2,363.2 L717.2,363.2 L718.2,363.2 L719.2,363.2 L720.2,363.2 L721.2,363.2 L722.2,363.2 L723.2,363.2 L724.2,363.2 L725.2,363.2 L726.2,363.2 L727.2,363.2 L728.2,363.2 L729.2,363.2 L730.2,363.2 L731.2,363.2 L732.2,363.2 L733.2,363.2 L734.2,363.2 L735.2,363.2 L736.2,363.2 L737.2,363.2 L738.2,363.2 L739.2,363.2 L740.2,363.2 L741.2,363.2 L742.2,363.2 L743.2,363.2 L744.2,363.2 L745.2,363.2 L746.2,363.2 L747.2,363.2 L748.2,363.2 L749.2,363.2 L750.2,363.2 L751.2,363.2 L752.2,363.2 L753.2,363.2 L754.2,363.2 L755.2,363.2 L756.2,363.2 L757.2,363.2 L758.2,363.2 L759.2,363.2 L760.2,363.2 L761.2,363.2 L762.2,363.2 L763.2,363.2 L764.2,363.2 L765.2,363.2 L766.2,363.2 L767.2,363.2 L768.2,363.2 L769.2,363.2 L770.2,363.2 L771.2,363.2 L772.2,363.2 L773.2,363.2 L774.2,363.2 L775.2,363.2 L776.2,363.2 L777.2,363.2 L778.2,363.2 L779.2,363.2 L780.2,363.2 L781.2,363.2 L782.2,363.2 L783.2,363.2 L784.2,363.2 L785.2,363.2 L786.2,363.2 L787.2,363.2 L788.2,363.2 L789.2,363.2 L790.2,363.2 L791.2,363.2 L792.2,363.2 L793.2,363.2 L794.2,363.2 L795.2,363.2 L796.2,363.2 L797.2,363.2 L798.2,363.2 L799.2,363.2 L800.2,363.2 L801.2,363.2 L802.2,363.2 L803.2,363.2 L804.2,363.2 L805.2,363.2 L806.2,363.2 L807.2,363.2 L808.2,363.2 L809.2,363.2 L810.2,363.2 L811.2,363.2 L812.2,363.2 L813.2,363.2 L814.2,363.2 L815.2,363.2 L816.2,363.2 L817.2,363.2 L818.2,363.2 L819.2,363.2 L820.2,363.2 L821.2,363.2 L822.2,363.2 L823.2,363.2 L824.2,363.2 L825.2,363.2 L826.2,363.2 L827.2,363.2 L828.2,363.2 L829.2,363.2 L830.2,363.2 L831.2,363.2 L832.2,363.2 L833.2,363.2 L834.2,363.2 L835.2,363.2 L836.2,363.2 L837.2,363.2 L838.2,363.2 L839.2,363.2 L840.2,363.2 L841.2,363.2 L842.2,363.2 L843.2,363.2 L844.2,363.2 L845.2,363.2 L846.2,363.2 L847.2,363.2 L848.2,363.2 L849.2,363.2 L850.2,363.2 L851.2,363.2 L852.2,363.2 L853.2,363.2 L854.2,363.2 L855.2,363.2 L856.2,363.2 L857.2,363.2 L858.2,363.2 L859.2,363.2 L860.2,363.2 L861.2,363.2 L862.2,363.2 L863.2,363.2 L864.2,363.2 L865.2,363.2" fill="none" stroke="#9a4a98" stroke-width="1.8"/>
<path d="M152.2,363.2 L865.5,362" stroke="#b4947e" stroke-width="2.6" fill="none"/>
<path d="M152.2,366.1 L153.2,366.1 L154.2,366.2 L155.2,366.3 L156.2,366.4 L157.2,366.5 L158.2,366.6 L159.2,366.7 L160.2,366.8 L161.2,366.9 L162.2,367.0 L163.2,367.1 L164.2,367.2 L165.2,367.3 L166.2,367.4 L167.2,367.6 L168.2,367.7 L169.2,367.8 L170.2,368.0 L171.2,368.1 L172.2,368.3 L173.2,368.4 L174.2,368.6 L175.2,368.7 L176.2,368.9 L177.2,369.1 L178.2,369.2 L179.2,369.4 L180.2,369.6 L181.2,369.7 L182.2,369.9 L183.2,370.1 L184.2,370.3 L185.2,370.5 L186.2,370.7 L187.2,370.9 L188.2,371.1 L189.2,371.3 L190.2,371.5 L191.2,371.7 L192.2,371.9 L193.2,372.1 L194.2,372.3 L195.2,372.5 L196.2,372.7 L197.2,372.9 L198.2,373.1 L199.2,373.3 L200.2,373.6 L201.2,373.8 L202.2,374.0 L203.2,374.2 L204.2,374.4 L205.2,374.6 L206.2,374.8 L207.2,375.0 L208.2,375.2 L209.2,375.3 L210.2,375.5 L211.2,375.7 L212.2,375.9 L213.2,376.0 L214.2,376.2 L215.2,376.4 L216.2,376.5 L217.2,376.7 L218.2,376.8 L219.2,377.0 L220.2,377.1 L221.2,377.2 L222.2,377.3 L223.2,377.4 L224.2,377.5 L225.2,377.6 L226.2,377.7 L227.2,377.8 L228.2,377.9 L229.2,377.9 L230.2,378.0 L231.2,378.0 L232.2,378.1 L233.2,378.1 L234.2,378.1 L235.2,378.1 L236.2,378.1 L237.2,378.1 L238.2,378.1 L239.2,378.1 L240.2,378.0 L241.2,378.0 L242.2,377.9 L243.2,377.9 L244.2,377.8 L245.2,377.7 L246.2,377.6 L247.2,377.6 L248.2,377.5 L249.2,377.3 L250.2,377.2 L251.2,377.1 L252.2,377.0 L253.2,376.8 L254.2,376.7 L255.2,376.5 L256.2,376.4 L257.2,376.2 L258.2,376.0 L259.2,375.9 L260.2,375.7 L261.2,375.5 L262.2,375.3 L263.2,375.1 L264.2,374.9 L265.2,374.7 L266.2,374.5 L267.2,374.3 L268.2,374.1 L269.2,373.9 L270.2,373.7 L271.2,373.5 L272.2,373.3 L273.2,373.0 L274.2,372.8 L275.2,372.6 L276.2,372.4 L277.2,372.2 L278.2,371.9 L279.2,371.7 L280.2,371.5 L281.2,371.3 L282.2,371.1 L283.2,370.8 L284.2,370.6 L285.2,370.4 L286.2,370.2 L287.2,370.0 L288.2,369.8 L289.2,369.6 L290.2,369.3 L291.2,369.1 L292.2,368.9 L293.2,368.7 L294.2,368.5 L295.2,368.3 L296.2,368.1 L297.2,368.0 L298.2,367.8 L299.2,367.6 L300.2,367.4 L301.2,367.2 L302.2,367.0 L303.2,366.8 L304.2,366.7 L305.2,366.5 L306.2,366.3 L307.2,366.1 L308.2,366.0 L309.2,365.8 L310.2,365.6 L311.2,365.5 L312.2,365.3 L313.2,365.1 L314.2,365.0 L315.2,364.8 L316.2,364.7 L317.2,364.5 L318.2,364.3 L319.2,364.2 L320.2,364.0 L321.2,363.9 L322.2,363.7 L323.2,363.6 L324.2,363.4 L325.2,363.2 L326.2,363.1 L327.2,362.9 L328.2,362.8 L329.2,362.6 L330.2,362.4 L331.2,362.3 L332.2,362.1 L333.2,361.9 L334.2,361.7 L335.2,361.6 L336.2,361.4 L337.2,361.2 L338.2,361.0 L339.2,360.8 L340.2,360.6 L341.2,360.4 L342.2,360.3 L343.2,360.1 L344.2,359.8 L345.2,359.6 L346.2,359.4 L347.2,359.2 L348.2,359.0 L349.2,358.8 L350.2,358.5 L351.2,358.3 L352.2,358.0 L353.2,357.8 L354.2,357.5 L355.2,357.3 L356.2,357.0 L357.2,356.8 L358.2,356.5 L359.2,356.2 L360.2,355.9 L361.2,355.6 L362.2,355.3 L363.2,355.0 L364.2,354.7 L365.2,354.4 L366.2,354.1 L367.2,353.8 L368.2,353.5 L369.2,353.1 L370.2,352.8 L371.2,352.4 L372.2,352.1 L373.2,351.7 L374.2,351.4 L375.2,351.0 L376.2,350.6 L377.2,350.2 L378.2,349.9 L379.2,349.5 L380.2,349.1 L381.2,348.7 L382.2,348.3 L383.2,347.9 L384.2,347.5 L385.2,347.1 L386.2,346.7 L387.2,346.2 L388.2,345.8 L389.2,345.4 L390.2,345.0 L391.2,344.6 L392.2,344.1 L393.2,343.7 L394.2,343.3 L395.2,342.9 L396.2,342.5 L397.2,342.0 L398.2,341.6 L399.2,341.2 L400.2,340.8 L401.2,340.4 L402.2,340.0 L403.2,339.6 L404.2,339.2 L405.2,338.8 L406.2,338.4 L407.2,338.1 L408.2,337.7 L409.2,337.4 L410.2,337.0 L411.2,336.7 L412.2,336.4 L413.2,336.1 L414.2,335.8 L415.2,335.5 L416.2,335.2 L417.2,335.0 L418.2,334.7 L419.2,334.5 L420.2,334.3 L421.2,334.2 L422.2,334.0 L423.2,333.9 L424.2,333.8 L425.2,333.7 L426.2,333.6 L427.2,333.6 L428.2,333.6 L429.2,333.6 L430.2,333.7 L431.2,333.8 L432.2,333.9 L433.2,334.0 L434.2,334.2 L435.2,334.4 L436.2,334.6 L437.2,334.9 L438.2,335.2 L439.2,335.5 L440.2,335.9 L441.2,336.3 L442.2,336.8 L443.2,337.3 L444.2,337.8 L445.2,338.4 L446.2,339.0 L447.2,339.7 L448.2,340.4 L449.2,341.1 L450.2,341.9 L451.2,342.7 L452.2,343.6 L453.2,344.5 L454.2,345.4 L455.2,346.4 L456.2,347.5 L457.2,348.5 L458.2,349.7 L459.2,350.8 L460.2,352.0 L461.2,353.3 L462.2,354.5 L463.2,355.9 L464.2,357.2 L465.2,358.6 L466.2,360.0 L467.2,361.5 L468.2,363.0 L469.2,364.6 L470.2,366.1 L471.2,367.7 L472.2,369.4 L473.2,371.1 L474.2,372.7 L475.2,374.5 L476.2,376.2 L477.2,378.0 L478.2,379.8 L479.2,381.6 L480.2,383.4 L481.2,385.3 L482.2,387.1 L483.2,389.0 L484.2,390.9 L485.2,392.8 L486.2,394.7 L487.2,396.6 L488.2,398.5 L489.2,400.5 L490.2,402.4 L491.2,404.3 L492.2,406.2 L493.2,408.1 L494.2,410.0 L495.2,411.8 L496.2,413.7 L497.2,415.6 L498.2,417.4 L499.2,419.2 L500.2,421.0 L501.2,422.7 L502.2,424.5 L503.2,426.2 L504.2,427.9 L505.2,429.5 L506.2,431.1 L507.2,432.7 L508.2,434.2 L509.2,435.7 L510.2,437.2 L511.2,438.6 L512.2,440.0 L513.2,441.3 L514.2,442.6 L515.2,443.8 L516.2,445.0 L517.2,446.2 L518.2,447.3 L519.2,448.3 L520.2,449.3 L521.2,450.2 L522.2,451.1 L523.2,451.9 L524.2,452.7 L525.2,453.4 L526.2,454.1 L527.2,454.7 L528.2,455.3 L529.2,455.8 L530.2,456.2 L531.2,456.6 L532.2,457.0 L533.2,457.2 L534.2,457.5 L535.2,457.6 L536.2,457.8 L537.2,457.8 L538.2,457.9 L539.2,457.8 L540.2,457.8 L541.2,457.6 L542.2,457.4 L543.2,457.2 L544.2,456.9 L545.2,456.6 L546.2,456.3 L547.2,455.9 L548.2,455.4 L549.2,454.9 L550.2,454.4 L551.2,453.8 L552.2,453.2 L553.2,452.6 L554.2,451.9 L555.2,451.2 L556.2,450.4 L557.2,449.7 L558.2,448.9 L559.2,448.0 L560.2,447.2 L561.2,446.3 L562.2,445.4 L563.2,444.5 L564.2,443.5 L565.2,442.5 L566.2,441.5 L567.2,440.5 L568.2,439.5 L569.2,438.5 L570.2,437.4 L571.2,436.4 L572.2,435.3 L573.2,434.2 L574.2,433.1 L575.2,432.0 L576.2,430.9 L577.2,429.8 L578.2,428.7 L579.2,427.6 L580.2,426.4 L581.2,425.3 L582.2,424.2 L583.2,423.1 L584.2,421.9 L585.2,420.8 L586.2,419.7 L587.2,418.6 L588.2,417.5 L589.2,416.4 L590.2,415.3 L591.2,414.2 L592.2,413.1 L593.2,412.0 L594.2,411.0 L595.2,409.9 L596.2,408.9 L597.2,407.8 L598.2,406.8 L599.2,405.8 L600.2,404.8 L601.2,403.8 L602.2,402.8 L603.2,401.8 L604.2,400.9 L605.2,399.9 L606.2,399.0 L607.2,398.1 L608.2,397.2 L609.2,396.3 L610.2,395.4 L611.2,394.5 L612.2,393.7 L613.2,392.9 L614.2,392.0 L615.2,391.2 L616.2,390.5 L617.2,389.7 L618.2,388.9 L619.2,388.2 L620.2,387.5 L621.2,386.8 L622.2,386.1 L623.2,385.4 L624.2,384.7 L625.2,384.1 L626.2,383.4 L627.2,382.8 L628.2,382.2 L629.2,381.6 L630.2,381.0 L631.2,380.5 L632.2,379.9 L633.2,379.4 L634.2,378.9 L635.2,378.3 L636.2,377.9 L637.2,377.4 L638.2,376.9 L639.2,376.4 L640.2,376.0 L641.2,375.6 L642.2,375.2 L643.2,374.8 L644.2,374.4 L645.2,374.0 L646.2,373.6 L647.2,373.3 L648.2,372.9 L649.2,372.6 L650.2,372.3 L651.2,371.9 L652.2,371.6 L653.2,371.3 L654.2,371.1 L655.2,370.8 L656.2,370.5 L657.2,370.3 L658.2,370.0 L659.2,369.8 L660.2,369.6 L661.2,369.4 L662.2,369.1 L663.2,368.9 L664.2,368.7 L665.2,368.6 L666.2,368.4 L667.2,368.2 L668.2,368.0 L669.2,367.9 L670.2,367.7 L671.2,367.6 L672.2,367.4 L673.2,367.3 L674.2,367.2 L675.2,367.0 L676.2,366.9 L677.2,366.8 L678.2,366.7 L679.2,366.6 L680.2,366.5 L681.2,366.4 L682.2,366.3 L683.2,366.2 L684.2,366.2 L685.2,366.1 L686.2,366.0 L687.2,365.9 L688.2,365.9 L689.2,365.8 L690.2,365.7 L691.2,365.7 L692.2,365.6 L693.2,365.6 L694.2,365.5 L695.2,365.5 L696.2,365.4 L697.2,365.4 L698.2,365.3 L699.2,365.3 L700.2,365.3 L701.2,365.2 L702.2,365.2 L703.2,365.2 L704.2,365.1 L705.2,365.1 L706.2,365.1 L707.2,365.1 L708.2,365.0 L709.2,365.0 L710.2,365.0 L711.2,365.0 L712.2,365.0 L713.2,364.9 L714.2,364.9 L715.2,364.9 L716.2,364.9 L717.2,364.9 L718.2,364.9 L719.2,364.9 L720.2,364.9 L721.2,364.8 L722.2,364.8 L723.2,364.8 L724.2,364.8 L725.2,364.8 L726.2,364.8 L727.2,364.8 L728.2,364.8 L729.2,364.8 L730.2,364.8 L731.2,364.8 L732.2,364.8 L733.2,364.8 L734.2,364.8 L735.2,364.8 L736.2,364.7 L737.2,364.7 L738.2,364.7 L739.2,364.7 L740.2,364.7 L741.2,364.7 L742.2,364.7 L743.2,364.7 L744.2,364.7 L745.2,364.7 L746.2,364.7 L747.2,364.7 L748.2,364.7 L749.2,364.7 L750.2,364.7 L751.2,364.7 L752.2,364.7 L753.2,364.7 L754.2,364.7 L755.2,364.7 L756.2,364.7 L757.2,364.7 L758.2,364.7 L759.2,364.7 L760.2,364.7 L761.2,364.7 L762.2,364.7 L763.2,364.7 L764.2,364.7 L765.2,364.7 L766.2,364.7 L767.2,364.7 L768.2,364.7 L769.2,364.7 L770.2,364.7 L771.2,364.7 L772.2,364.7 L773.2,364.7 L774.2,364.7 L775.2,364.7 L776.2,364.7 L777.2,364.7 L778.2,364.7 L779.2,364.7 L780.2,364.7 L781.2,364.7 L782.2,364.7 L783.2,364.7 L784.2,364.7 L785.2,364.7 L786.2,364.7 L787.2,364.7 L788.2,364.7 L789.2,364.7 L790.2,364.7 L791.2,364.7 L792.2,364.7 L793.2,364.7 L794.2,364.7 L795.2,364.7 L796.2,364.7 L797.2,364.7 L798.2,364.7 L799.2,364.7 L800.2,364.7 L801.2,364.7 L802.2,364.7 L803.2,364.7 L804.2,364.7 L805.2,364.7 L806.2,364.7 L807.2,364.7 L808.2,364.7 L809.2,364.7 L810.2,364.7 L811.2,364.7 L812.2,364.7 L813.2,364.7 L814.2,364.7 L815.2,364.7 L816.2,364.7 L817.2,364.7 L818.2,364.7 L819.2,364.7 L820.2,364.7 L821.2,364.7 L822.2,364.7 L823.2,364.7 L824.2,364.7 L825.2,364.7 L826.2,364.7 L827.2,364.7 L828.2,364.7 L829.2,364.7 L830.2,364.7 L831.2,364.7 L832.2,364.7 L833.2,364.7 L834.2,364.7 L835.2,364.7 L836.2,364.7 L837.2,364.7 L838.2,364.7 L839.2,364.7 L840.2,364.7 L841.2,364.7 L842.2,364.7 L843.2,364.7 L844.2,364.7 L845.2,364.7 L846.2,364.7 L847.2,364.7 L848.2,364.7 L849.2,364.7 L850.2,364.7 L851.2,364.7 L852.2,364.7 L853.2,364.7 L854.2,364.7 L855.2,364.7 L856.2,364.7 L857.2,364.7 L858.2,364.7 L859.2,364.7 L860.2,364.7 L861.2,364.7 L862.2,364.7 L863.2,364.7 L864.2,364.7 L865.2,364.7" fill="none" stroke="#3a8a48" stroke-width="1.5"/>
<path d="M152.2,364.9 L153.2,364.9 L154.2,365.0 L155.2,365.1 L156.2,365.2 L157.2,365.3 L158.2,365.4 L159.2,365.5 L160.2,365.6 L161.2,365.7 L162.2,365.8 L163.2,365.9 L164.2,366.0 L165.2,366.1 L166.2,366.2 L167.2,366.4 L168.2,366.5 L169.2,366.6 L170.2,366.8 L171.2,366.9 L172.2,367.1 L173.2,367.2 L174.2,367.4 L175.2,367.5 L176.2,367.7 L177.2,367.9 L178.2,368.0 L179.2,368.2 L180.2,368.4 L181.2,368.5 L182.2,368.7 L183.2,368.9 L184.2,369.1 L185.2,369.3 L186.2,369.5 L187.2,369.7 L188.2,369.9 L189.2,370.1 L190.2,370.3 L191.2,370.5 L192.2,370.7 L193.2,370.9 L194.2,371.1 L195.2,371.3 L196.2,371.5 L197.2,371.7 L198.2,371.9 L199.2,372.1 L200.2,372.4 L201.2,372.6 L202.2,372.8 L203.2,373.0 L204.2,373.2 L205.2,373.4 L206.2,373.6 L207.2,373.8 L208.2,374.0 L209.2,374.1 L210.2,374.3 L211.2,374.5 L212.2,374.7 L213.2,374.8 L214.2,375.0 L215.2,375.2 L216.2,375.3 L217.2,375.5 L218.2,375.6 L219.2,375.8 L220.2,375.9 L221.2,376.0 L222.2,376.1 L223.2,376.2 L224.2,376.3 L225.2,376.4 L226.2,376.5 L227.2,376.6 L228.2,376.7 L229.2,376.7 L230.2,376.8 L231.2,376.8 L232.2,376.9 L233.2,376.9 L234.2,376.9 L235.2,376.9 L236.2,376.9 L237.2,376.9 L238.2,376.9 L239.2,376.9 L240.2,376.8 L241.2,376.8 L242.2,376.7 L243.2,376.7 L244.2,376.6 L245.2,376.5 L246.2,376.4 L247.2,376.4 L248.2,376.3 L249.2,376.1 L250.2,376.0 L251.2,375.9 L252.2,375.8 L253.2,375.6 L254.2,375.5 L255.2,375.3 L256.2,375.2 L257.2,375.0 L258.2,374.8 L259.2,374.7 L260.2,374.5 L261.2,374.3 L262.2,374.1 L263.2,373.9 L264.2,373.7 L265.2,373.5 L266.2,373.3 L267.2,373.1 L268.2,372.9 L269.2,372.7 L270.2,372.5 L271.2,372.3 L272.2,372.1 L273.2,371.8 L274.2,371.6 L275.2,371.4 L276.2,371.2 L277.2,371.0 L278.2,370.7 L279.2,370.5 L280.2,370.3 L281.2,370.1 L282.2,369.9 L283.2,369.6 L284.2,369.4 L285.2,369.2 L286.2,369.0 L287.2,368.8 L288.2,368.6 L289.2,368.4 L290.2,368.1 L291.2,367.9 L292.2,367.7 L293.2,367.5 L294.2,367.3 L295.2,367.1 L296.2,366.9 L297.2,366.8 L298.2,366.6 L299.2,366.4 L300.2,366.2 L301.2,366.0 L302.2,365.8 L303.2,365.6 L304.2,365.5 L305.2,365.3 L306.2,365.1 L307.2,364.9 L308.2,364.8 L309.2,364.6 L310.2,364.4 L311.2,364.3 L312.2,364.1 L313.2,363.9 L314.2,363.8 L315.2,363.6 L316.2,363.5 L317.2,363.3 L318.2,363.1 L319.2,363.0 L320.2,362.8 L321.2,362.7 L322.2,362.5 L323.2,362.4 L324.2,362.2 L325.2,362.0 L326.2,361.9 L327.2,361.7 L328.2,361.6 L329.2,361.4 L330.2,361.2 L331.2,361.1 L332.2,360.9 L333.2,360.7 L334.2,360.5 L335.2,360.4 L336.2,360.2 L337.2,360.0 L338.2,359.8 L339.2,359.6 L340.2,359.4 L341.2,359.2 L342.2,359.1 L343.2,358.9 L344.2,358.6 L345.2,358.4 L346.2,358.2 L347.2,358.0 L348.2,357.8 L349.2,357.6 L350.2,357.3 L351.2,357.1 L352.2,356.8 L353.2,356.6 L354.2,356.3 L355.2,356.1 L356.2,355.8 L357.2,355.6 L358.2,355.3 L359.2,355.0 L360.2,354.7 L361.2,354.4 L362.2,354.1 L363.2,353.8 L364.2,353.5 L365.2,353.2 L366.2,352.9 L367.2,352.6 L368.2,352.3 L369.2,351.9 L370.2,351.6 L371.2,351.2 L372.2,350.9 L373.2,350.5 L374.2,350.2 L375.2,349.8 L376.2,349.4 L377.2,349.0 L378.2,348.7 L379.2,348.3 L380.2,347.9 L381.2,347.5 L382.2,347.1 L383.2,346.7 L384.2,346.3 L385.2,345.9 L386.2,345.5 L387.2,345.0 L388.2,344.6 L389.2,344.2 L390.2,343.8 L391.2,343.4 L392.2,342.9 L393.2,342.5 L394.2,342.1 L395.2,341.7 L396.2,341.3 L397.2,340.8 L398.2,340.4 L399.2,340.0 L400.2,339.6 L401.2,339.2 L402.2,338.8 L403.2,338.4 L404.2,338.0 L405.2,337.6 L406.2,337.2 L407.2,336.9 L408.2,336.5 L409.2,336.2 L410.2,335.8 L411.2,335.5 L412.2,335.2 L413.2,334.9 L414.2,334.6 L415.2,334.3 L416.2,334.0 L417.2,333.8 L418.2,333.5 L419.2,333.3 L420.2,333.1 L421.2,333.0 L422.2,332.8 L423.2,332.7 L424.2,332.6 L425.2,332.5 L426.2,332.4 L427.2,332.4 L428.2,332.4 L429.2,332.4 L430.2,332.5 L431.2,332.6 L432.2,332.7 L433.2,332.8 L434.2,333.0 L435.2,333.2 L436.2,333.4 L437.2,333.7 L438.2,334.0 L439.2,334.3 L440.2,334.7 L441.2,335.1 L442.2,335.6 L443.2,336.1 L444.2,336.6 L445.2,337.2 L446.2,337.8 L447.2,338.5 L448.2,339.2 L449.2,339.9 L450.2,340.7 L451.2,341.5 L452.2,342.4 L453.2,343.3 L454.2,344.2 L455.2,345.2 L456.2,346.3 L457.2,347.3 L458.2,348.5 L459.2,349.6 L460.2,350.8 L461.2,352.1 L462.2,353.3 L463.2,354.7 L464.2,356.0 L465.2,357.4 L466.2,358.8 L467.2,360.3 L468.2,361.8 L469.2,363.4 L470.2,364.9 L471.2,366.5 L472.2,368.2 L473.2,369.9 L474.2,371.5 L475.2,373.3 L476.2,375.0 L477.2,376.8 L478.2,378.6 L479.2,380.4 L480.2,382.2 L481.2,384.1 L482.2,385.9 L483.2,387.8 L484.2,389.7 L485.2,391.6 L486.2,393.5 L487.2,395.4 L488.2,397.3 L489.2,399.3 L490.2,401.2 L491.2,403.1 L492.2,405.0 L493.2,406.9 L494.2,408.8 L495.2,410.6 L496.2,412.5 L497.2,414.4 L498.2,416.2 L499.2,418.0 L500.2,419.8 L501.2,421.5 L502.2,423.3 L503.2,425.0 L504.2,426.7 L505.2,428.3 L506.2,429.9 L507.2,431.5 L508.2,433.0 L509.2,434.5 L510.2,436.0 L511.2,437.4 L512.2,438.8 L513.2,440.1 L514.2,441.4 L515.2,442.6 L516.2,443.8 L517.2,445.0 L518.2,446.1 L519.2,447.1 L520.2,448.1 L521.2,449.0 L522.2,449.9 L523.2,450.7 L524.2,451.5 L525.2,452.2 L526.2,452.9 L527.2,453.5 L528.2,454.1 L529.2,454.6 L530.2,455.0 L531.2,455.4 L532.2,455.8 L533.2,456.0 L534.2,456.3 L535.2,456.4 L536.2,456.6 L537.2,456.6 L538.2,456.7 L539.2,456.6 L540.2,456.6 L541.2,456.4 L542.2,456.2 L543.2,456.0 L544.2,455.7 L545.2,455.4 L546.2,455.1 L547.2,454.7 L548.2,454.2 L549.2,453.7 L550.2,453.2 L551.2,452.6 L552.2,452.0 L553.2,451.4 L554.2,450.7 L555.2,450.0 L556.2,449.2 L557.2,448.5 L558.2,447.7 L559.2,446.8 L560.2,446.0 L561.2,445.1 L562.2,444.2 L563.2,443.3 L564.2,442.3 L565.2,441.3 L566.2,440.3 L567.2,439.3 L568.2,438.3 L569.2,437.3 L570.2,436.2 L571.2,435.2 L572.2,434.1 L573.2,433.0 L574.2,431.9 L575.2,430.8 L576.2,429.7 L577.2,428.6 L578.2,427.5 L579.2,426.4 L580.2,425.2 L581.2,424.1 L582.2,423.0 L583.2,421.9 L584.2,420.7 L585.2,419.6 L586.2,418.5 L587.2,417.4 L588.2,416.3 L589.2,415.2 L590.2,414.1 L591.2,413.0 L592.2,411.9 L593.2,410.8 L594.2,409.8 L595.2,408.7 L596.2,407.7 L597.2,406.6 L598.2,405.6 L599.2,404.6 L600.2,403.6 L601.2,402.6 L602.2,401.6 L603.2,400.6 L604.2,399.7 L605.2,398.7 L606.2,397.8 L607.2,396.9 L608.2,396.0 L609.2,395.1 L610.2,394.2 L611.2,393.3 L612.2,392.5 L613.2,391.7 L614.2,390.8 L615.2,390.0 L616.2,389.3 L617.2,388.5 L618.2,387.7 L619.2,387.0 L620.2,386.3 L621.2,385.6 L622.2,384.9 L623.2,384.2 L624.2,383.5 L625.2,382.9 L626.2,382.2 L627.2,381.6 L628.2,381.0 L629.2,380.4 L630.2,379.8 L631.2,379.3 L632.2,378.7 L633.2,378.2 L634.2,377.7 L635.2,377.1 L636.2,376.7 L637.2,376.2 L638.2,375.7 L639.2,375.2 L640.2,374.8 L641.2,374.4 L642.2,374.0 L643.2,373.6 L644.2,373.2 L645.2,372.8 L646.2,372.4 L647.2,372.1 L648.2,371.7 L649.2,371.4 L650.2,371.1 L651.2,370.7 L652.2,370.4 L653.2,370.1 L654.2,369.9 L655.2,369.6 L656.2,369.3 L657.2,369.1 L658.2,368.8 L659.2,368.6 L660.2,368.4 L661.2,368.2 L662.2,367.9 L663.2,367.7 L664.2,367.5 L665.2,367.4 L666.2,367.2 L667.2,367.0 L668.2,366.8 L669.2,366.7 L670.2,366.5 L671.2,366.4 L672.2,366.2 L673.2,366.1 L674.2,366.0 L675.2,365.8 L676.2,365.7 L677.2,365.6 L678.2,365.5 L679.2,365.4 L680.2,365.3 L681.2,365.2 L682.2,365.1 L683.2,365.0 L684.2,365.0 L685.2,364.9 L686.2,364.8 L687.2,364.7 L688.2,364.7 L689.2,364.6 L690.2,364.5 L691.2,364.5 L692.2,364.4 L693.2,364.4 L694.2,364.3 L695.2,364.3 L696.2,364.2 L697.2,364.2 L698.2,364.1 L699.2,364.1 L700.2,364.1 L701.2,364.0 L702.2,364.0 L703.2,364.0 L704.2,363.9 L705.2,363.9 L706.2,363.9 L707.2,363.9 L708.2,363.8 L709.2,363.8 L710.2,363.8 L711.2,363.8 L712.2,363.8 L713.2,363.7 L714.2,363.7 L715.2,363.7 L716.2,363.7 L717.2,363.7 L718.2,363.7 L719.2,363.7 L720.2,363.7 L721.2,363.6 L722.2,363.6 L723.2,363.6 L724.2,363.6 L725.2,363.6 L726.2,363.6 L727.2,363.6 L728.2,363.6 L729.2,363.6 L730.2,363.6 L731.2,363.6 L732.2,363.6 L733.2,363.6 L734.2,363.6 L735.2,363.6 L736.2,363.5 L737.2,363.5 L738.2,363.5 L739.2,363.5 L740.2,363.5 L741.2,363.5 L742.2,363.5 L743.2,363.5 L744.2,363.5 L745.2,363.5 L746.2,363.5 L747.2,363.5 L748.2,363.5 L749.2,363.5 L750.2,363.5 L751.2,363.5 L752.2,363.5 L753.2,363.5 L754.2,363.5 L755.2,363.5 L756.2,363.5 L757.2,363.5 L758.2,363.5 L759.2,363.5 L760.2,363.5 L761.2,363.5 L762.2,363.5 L763.2,363.5 L764.2,363.5 L765.2,363.5 L766.2,363.5 L767.2,363.5 L768.2,363.5 L769.2,363.5 L770.2,363.5 L771.2,363.5 L772.2,363.5 L773.2,363.5 L774.2,363.5 L775.2,363.5 L776.2,363.5 L777.2,363.5 L778.2,363.5 L779.2,363.5 L780.2,363.5 L781.2,363.5 L782.2,363.5 L783.2,363.5 L784.2,363.5 L785.2,363.5 L786.2,363.5 L787.2,363.5 L788.2,363.5 L789.2,363.5 L790.2,363.5 L791.2,363.5 L792.2,363.5 L793.2,363.5 L794.2,363.5 L795.2,363.5 L796.2,363.5 L797.2,363.5 L798.2,363.5 L799.2,363.5 L800.2,363.5 L801.2,363.5 L802.2,363.5 L803.2,363.5 L804.2,363.5 L805.2,363.5 L806.2,363.5 L807.2,363.5 L808.2,363.5 L809.2,363.5 L810.2,363.5 L811.2,363.5 L812.2,363.5 L813.2,363.5 L814.2,363.5 L815.2,363.5 L816.2,363.5 L817.2,363.5 L818.2,363.5 L819.2,363.5 L820.2,363.5 L821.2,363.5 L822.2,363.5 L823.2,363.5 L824.2,363.5 L825.2,363.5 L826.2,363.5 L827.2,363.5 L828.2,363.5 L829.2,363.5 L830.2,363.5 L831.2,363.5 L832.2,363.5 L833.2,363.5 L834.2,363.5 L835.2,363.5 L836.2,363.5 L837.2,363.5 L838.2,363.5 L839.2,363.5 L840.2,363.5 L841.2,363.5 L842.2,363.5 L843.2,363.5 L844.2,363.5 L845.2,363.5 L846.2,363.5 L847.2,363.5 L848.2,363.5 L849.2,363.5 L850.2,363.5 L851.2,363.5 L852.2,363.5 L853.2,363.5 L854.2,363.5 L855.2,363.5 L856.2,363.5 L857.2,363.5 L858.2,363.5 L859.2,363.5 L860.2,363.5 L861.2,363.5 L862.2,363.5 L863.2,363.5 L864.2,363.5 L865.2,363.5" fill="none" stroke="#2c2660" stroke-width="1.75"/>
<rect x="16" y="78" width="612.6" height="208" fill="#bbb9ba" />
<rect x="16" y="78" width="612.6" height="2.5" fill="#eaeaea" />
<rect x="16" y="78" width="2.5" height="208" fill="#eaeaea" />
<rect x="626.1" y="78" width="2.5" height="208" fill="#262424" />
<rect x="16" y="283.7" width="612.6" height="2.3" fill="#262424" />
<rect x="19.5" y="82" width="604.5" height="18.6" fill="#767476" />
<rect x="22" y="84" width="16" height="14" fill="#2a2a5a"/><path d="M23,91 L28,86.5 L33,92 L37,87" stroke="#d03030" stroke-width="2" fill="none"/><circle cx="35.5" cy="89" r="1.9" fill="#30c040"/><circle cx="35.5" cy="95" r="1.9" fill="#e0d040"/><rect x="24" y="92" width="5" height="4" fill="#4040c0"/>
<text x="42.4" y="96" font-size="13" fill="#b8b6b8" textLength="147.3" lengthAdjust="spacingAndGlyphs" >Curve Fitting Information</text>
<rect x="603" y="83" width="19.5" height="16.5" fill="#cac8c9" />
<rect x="603" y="83" width="20" height="1.3" fill="#f4f4f4" />
<rect x="603" y="83" width="1.3" height="16.5" fill="#f4f4f4" />
<rect x="603" y="98" width="20" height="1.5" fill="#262626" />
<rect x="621.5" y="83" width="1.5" height="16.5" fill="#262626" />
<path d="M609,87 L616,95 M616,87 L609,95" stroke="#000" stroke-width="2.1"/>
<text x="26.7" y="119" font-size="13" fill="#1c1c1c" textLength="18.400000000000002" lengthAdjust="spacingAndGlyphs" stroke="#1c1c1c" stroke-width="0.45" >No.</text>
<text x="60.2" y="119" font-size="13" fill="#1c1c1c" textLength="42.8" lengthAdjust="spacingAndGlyphs" stroke="#1c1c1c" stroke-width="0.45" >Position</text>
<text x="132.8" y="119" font-size="13" fill="#1c1c1c" textLength="39.69999999999999" lengthAdjust="spacingAndGlyphs" stroke="#1c1c1c" stroke-width="0.45" >FWHM</text>
<text x="199" y="119" font-size="13" fill="#1c1c1c" textLength="36" lengthAdjust="spacingAndGlyphs" stroke="#1c1c1c" stroke-width="0.45" >Height</text>
<text x="262.8" y="119" font-size="13" fill="#1c1c1c" textLength="25.899999999999977" lengthAdjust="spacingAndGlyphs" stroke="#1c1c1c" stroke-width="0.45" >Area</text>
<text x="321" y="119" font-size="13" fill="#1c1c1c" textLength="81" lengthAdjust="spacingAndGlyphs" stroke="#1c1c1c" stroke-width="0.45" >Func[G/(L+G)]</text>
<text x="415" y="119" font-size="13" fill="#1c1c1c" textLength="55" lengthAdjust="spacingAndGlyphs" stroke="#1c1c1c" stroke-width="0.45" >Line Type</text>
<rect x="26.5" y="127" width="449" height="142.5" fill="#ffffff" />
<rect x="26.5" y="126.5" width="449" height="2" fill="#3a3838" />
<rect x="26.5" y="126.5" width="2" height="143" fill="#3a3838" />
<rect x="26.5" y="268" width="449" height="1.5" fill="#eeeeee" />
<rect x="474" y="126.5" width="1.5" height="143" fill="#eeeeee" />
<clipPath id="ca"><rect x="250" y="120" width="72.7" height="100"/></clipPath>
<text x="33.5" y="140.7" font-size="13" fill="#1c1c1c" stroke="#1c1c1c" stroke-width="0.45" >1</text>
<text x="113.8" y="140.7" font-size="13" fill="#1c1c1c" textLength="44" lengthAdjust="spacingAndGlyphs" text-anchor="end" stroke="#1c1c1c" stroke-width="0.45" >343.542</text>
<text x="183.3" y="140.7" font-size="13" fill="#1c1c1c" textLength="37" lengthAdjust="spacingAndGlyphs" text-anchor="end" stroke="#1c1c1c" stroke-width="0.45" >45.364</text>
<text x="251.5" y="140.7" font-size="13" fill="#1c1c1c" textLength="42.7" lengthAdjust="spacingAndGlyphs" text-anchor="end" stroke="#1c1c1c" stroke-width="0.45" >-24.309</text>
<text x="321" y="140.7" font-size="13" fill="#1c1c1c" textLength="56" lengthAdjust="spacingAndGlyphs" text-anchor="end" stroke="#1c1c1c" stroke-width="0.45" >-1173.857</text>
<text x="364.8" y="140.7" font-size="13" fill="#1c1c1c" text-anchor="end" stroke="#1c1c1c" stroke-width="0.45" >100.0</text>
<rect x="418" y="139.79999999999998" width="33.5" height="2.6" fill="#a4a270" />
<text x="33.5" y="163.89999999999998" font-size="13" fill="#1c1c1c" stroke="#1c1c1c" stroke-width="0.45" >2</text>
<text x="113.8" y="163.89999999999998" font-size="13" fill="#1c1c1c" textLength="44" lengthAdjust="spacingAndGlyphs" text-anchor="end" stroke="#1c1c1c" stroke-width="0.45" >485.829</text>
<text x="183.3" y="163.89999999999998" font-size="13" fill="#1c1c1c" textLength="37" lengthAdjust="spacingAndGlyphs" text-anchor="end" stroke="#1c1c1c" stroke-width="0.45" >60.040</text>
<text x="251.5" y="163.89999999999998" font-size="13" fill="#1c1c1c" textLength="46" lengthAdjust="spacingAndGlyphs" text-anchor="end" stroke="#1c1c1c" stroke-width="0.45" >-206.054</text>
<g clip-path="url(#ca)">
<text x="265" y="163.89999999999998" font-size="13" fill="#1c1c1c" textLength="60" lengthAdjust="spacingAndGlyphs" stroke="#1c1c1c" stroke-width="0.45" >-15311.671</text>
</g>
<text x="364.8" y="163.89999999999998" font-size="13" fill="#1c1c1c" text-anchor="end" stroke="#1c1c1c" stroke-width="0.45" >65.8</text>
<rect x="418" y="162.99999999999997" width="33.5" height="2.6" fill="#5c9c9c" />
<text x="33.5" y="187.1" font-size="13" fill="#1c1c1c" stroke="#1c1c1c" stroke-width="0.45" >3</text>
<text x="113.8" y="187.1" font-size="13" fill="#1c1c1c" textLength="44" lengthAdjust="spacingAndGlyphs" text-anchor="end" stroke="#1c1c1c" stroke-width="0.45" >446.046</text>
<text x="183.3" y="187.1" font-size="13" fill="#1c1c1c" textLength="37" lengthAdjust="spacingAndGlyphs" text-anchor="end" stroke="#1c1c1c" stroke-width="0.45" >52.820</text>
<text x="251.5" y="187.1" font-size="13" fill="#1c1c1c" textLength="42.7" lengthAdjust="spacingAndGlyphs" text-anchor="end" stroke="#1c1c1c" stroke-width="0.45" >107.055</text>
<text x="321" y="187.1" font-size="13" fill="#1c1c1c" textLength="53" lengthAdjust="spacingAndGlyphs" text-anchor="end" stroke="#1c1c1c" stroke-width="0.45" >6764.246</text>
<text x="364.8" y="187.1" font-size="13" fill="#1c1c1c" text-anchor="end" stroke="#1c1c1c" stroke-width="0.45" >74.0</text>
<rect x="418" y="186.2" width="33.5" height="2.6" fill="#985c8c" />
<text x="481" y="119.8" font-size="13" fill="#1c1c1c" textLength="46.7" lengthAdjust="spacingAndGlyphs" stroke="#1c1c1c" stroke-width="0.45" >Iteration:</text>
<text x="555.8" y="119.8" font-size="13" fill="#1c1c1c" stroke="#1c1c1c" stroke-width="0.45" >5</text>
<text x="481" y="140" font-size="13" fill="#1c1c1c" textLength="49.8" lengthAdjust="spacingAndGlyphs" stroke="#1c1c1c" stroke-width="0.45" >Residual:</text>
<text x="555.8" y="140" font-size="13" fill="#1c1c1c" textLength="51.5" lengthAdjust="spacingAndGlyphs" stroke="#1c1c1c" stroke-width="0.45" >1.803360</text>
<text x="481" y="160.2" font-size="13" fill="#1c1c1c" textLength="59.2" lengthAdjust="spacingAndGlyphs" stroke="#1c1c1c" stroke-width="0.45" >Difference:</text>
<text x="555.8" y="160.2" font-size="13" fill="#1c1c1c" textLength="51.5" lengthAdjust="spacingAndGlyphs" stroke="#1c1c1c" stroke-width="0.45" >0.244343</text>
<text x="485" y="183.6" font-size="13" fill="#1c1c1c" textLength="84.8" lengthAdjust="spacingAndGlyphs" stroke="#1c1c1c" stroke-width="0.45" >Baseline Factor</text>
<text x="506" y="200" font-size="13" fill="#1c1c1c" textLength="80" lengthAdjust="spacingAndGlyphs" stroke="#1c1c1c" stroke-width="0.45" >A=9.1187E-01</text>
<text x="506" y="221" font-size="13" fill="#1c1c1c" stroke="#1c1c1c" stroke-width="0.45" >B=</text>
<text x="523" y="222.5" font-size="13" fill="#1c1c1c" textLength="65" lengthAdjust="spacingAndGlyphs" stroke="#1c1c1c" stroke-width="0.45" >1.1102E-02</text>
<text x="506" y="243" font-size="13" fill="#1c1c1c" stroke="#1c1c1c" stroke-width="0.45" >C=</text>
<rect x="516.7" y="253" width="79.1" height="23.3" fill="#bbb9ba" />
<rect x="516.7" y="253" width="79.1" height="1.6" fill="#f6f6f6" />
<rect x="516.7" y="253" width="1.6" height="23.3" fill="#f6f6f6" />
<rect x="516.7" y="274.1" width="79.1" height="2.2" fill="#262424" />
<rect x="593.6" y="253" width="2.2" height="23.3" fill="#262424" />
<text x="541.4" y="269.8" font-size="13" fill="#1c1c1c" textLength="30.4" lengthAdjust="spacingAndGlyphs" stroke="#1c1c1c" stroke-width="0.45" >Close</text>
<rect x="541.4" y="271.2" width="8" height="1.3" fill="#1c1c1c" /></svg>
</body></html>
